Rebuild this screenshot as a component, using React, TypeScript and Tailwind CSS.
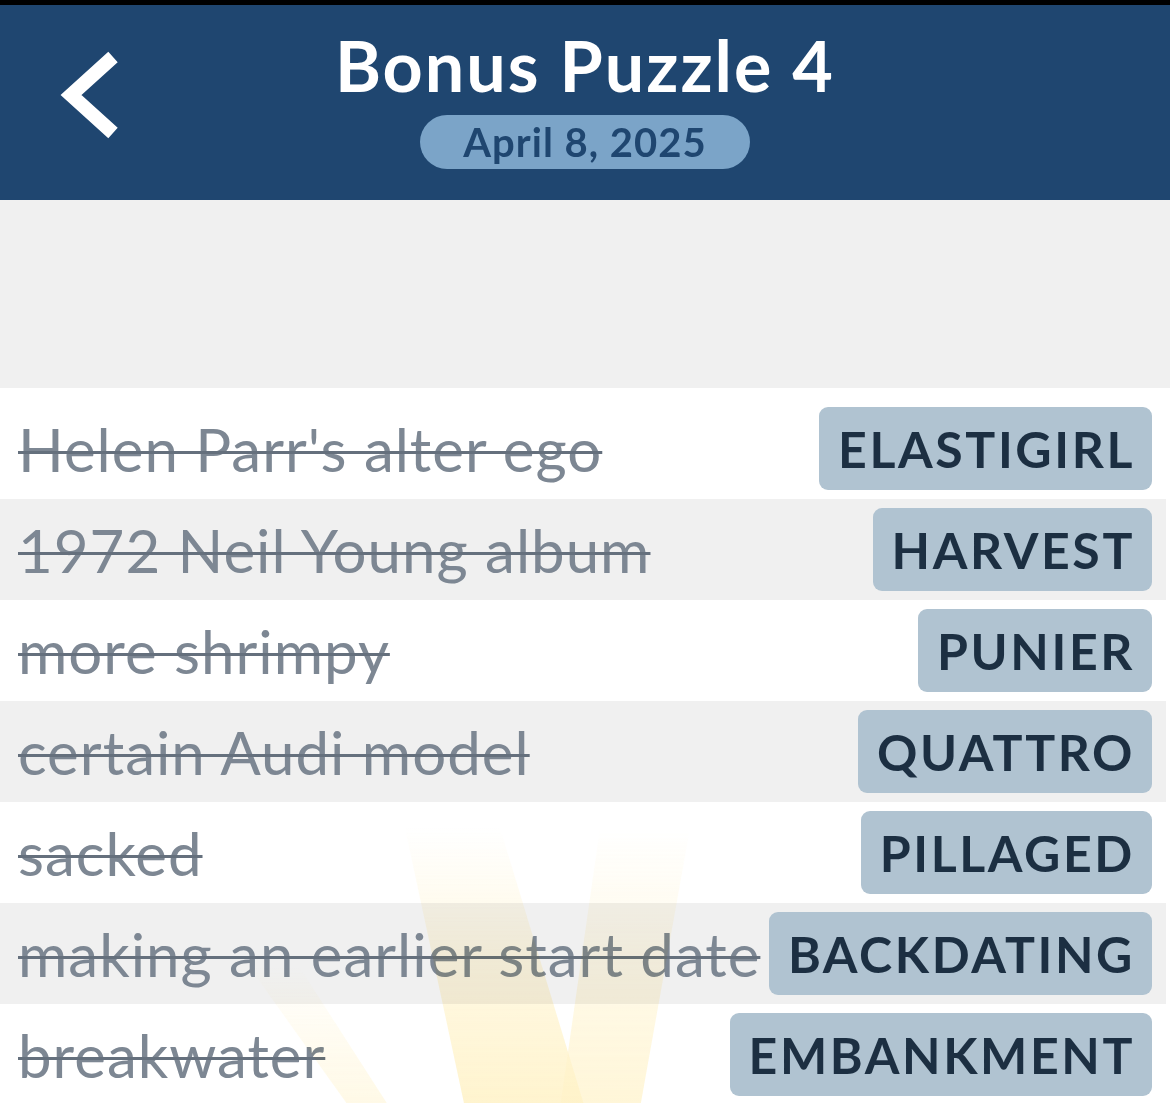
import React from "react";

type Clue = { clue: string; answer: string };

const clues: Clue[] = [
  { clue: "Helen Parr's alter ego", answer: "ELASTIGIRL" },
  { clue: "1972 Neil Young album", answer: "HARVEST" },
  { clue: "more shrimpy", answer: "PUNIER" },
  { clue: "certain Audi model", answer: "QUATTRO" },
  { clue: "sacked", answer: "PILLAGED" },
  { clue: "making an earlier start date", answer: "BACKDATING" },
  { clue: "breakwater", answer: "EMBANKMENT" },
];

const font = { fontFamily: "Lato, 'Noto Sans', sans-serif" };

function BackChevron() {
  return (
    <svg width="70" height="100" viewBox="0 0 70 100" className="absolute left-[50px] top-[40px]">
      <polyline
        points="63,12 21,50 63,88"
        fill="none"
        stroke="white"
        strokeWidth="14"
        strokeLinejoin="miter"
        strokeLinecap="butt"
      />
    </svg>
  );
}

function Rays() {
  // faint sunburst behind the lower rows
  return (
    <svg
      className="absolute left-0 top-[400px] pointer-events-none mix-blend-multiply opacity-75"
      width="1170"
      height="320"
      viewBox="0 0 1170 320"
    >
      <defs>
        <linearGradient id="ray" x1="0" y1="0" x2="0" y2="1">
          <stop offset="0" stopColor="#fff1c2" stopOpacity="0" />
          <stop offset="0.45" stopColor="#fff1c2" stopOpacity="0.6" />
          <stop offset="1" stopColor="#ffeeb5" stopOpacity="0.9" />
        </linearGradient>
      </defs>
      <polygon points="405,40 500,40 585,320 465,320" fill="url(#ray)" />
      <polygon points="600,40 690,40 640,320 560,320" fill="url(#ray)" opacity="0.8" />
      <polygon points="250,180 300,180 390,320 350,320" fill="url(#ray)" opacity="0.5" />
    </svg>
  );
}

function Row({ item, index }: { item: Clue; index: number }) {
  const shaded = index % 2 === 1;
  return (
    <div
      className={`flex items-center justify-between h-[101px] pl-[18px] pr-[14px] ${
        shaded ? "bg-[#f0f0f0]" : "bg-white"
      }`}
    >
      <span
        className="whitespace-nowrap text-[60px] tracking-[1px] leading-none text-[#7d8793] line-through decoration-[3px] decoration-[#65707d]"
        style={font}
      >
        {item.clue}
      </span>
      <span
        className="shrink-0 flex items-center h-[83px] pl-[19px] pr-[17px] rounded-[9px] bg-[#b0c3d1] text-[#1c2f42] text-[50px] tracking-[2.6px] font-bold leading-none"
        style={font}
      >
        {item.answer}
      </span>
    </div>
  );
}

export default function App() {
  return (
    <div className="w-[1170px] h-[1103px] overflow-hidden bg-white" style={font}>
      <div className="h-[5px] bg-black" />
      <div className="relative h-[195px] bg-[#1f4670] flex flex-col items-center">
        <BackChevron />
        <h1 className="mt-[20px] text-white font-bold text-[70px] tracking-[2px] leading-[80px]">Bonus Puzzle 4</h1>
        <div className="mt-[10px] h-[54px] px-[43px] rounded-full bg-[#7ba4c8] flex items-center text-[#1f4670] text-[40px] tracking-[1px] font-bold">
          April 8, 2025
        </div>
      </div>
      <div className="h-[188px] bg-[#f0f0f0]" />
      <div className="relative pt-[10px] pr-[4px] bg-white">
        <div className="flex flex-col">
          {clues.map((c, i) => (
            <Row key={c.answer} item={c} index={i} />
          ))}
        </div>
        <Rays />
      </div>
    </div>
  );
}
